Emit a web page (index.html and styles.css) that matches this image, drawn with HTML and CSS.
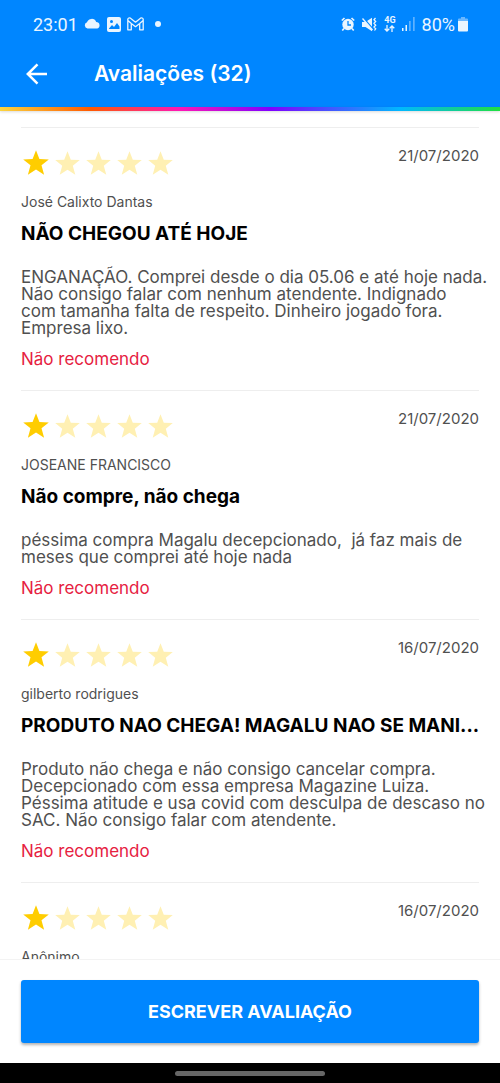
FILE: index.html
```
<!DOCTYPE html>
<html lang="pt-BR">
<head>
<meta charset="utf-8">
<meta name="viewport" content="width=device-width, initial-scale=1">
<title>Avaliações (32)</title>
<link rel="stylesheet" href="styles.css">
</head>
<body>
<svg class="defs" aria-hidden="true">
  <symbol id="star" viewBox="0 0 26 26"><path d="M13 .3 16.400 9 25.800 9.400 18.500 15.300 21.100 24.800 13 19.600 4.900 24.800 7.500 15.300.2 9.400 9.600 9Z"/></symbol>
</svg>
<header class="header">
  <div class="status">
    <span class="clock">23:01</span>
    <svg class="cloud" width="17" height="12" viewBox="0 0 17 12" fill="#eaf5ff"><path d="M3.500 10.500A3.200 3.200 0 0 1 3 4.300 4.900 4.900 0 0 1 12.200 3.900 3.400 3.400 0 0 1 13.300 10.500Z"/></svg>
    <svg class="photo" width="14" height="15" viewBox="0 0 14 15"><rect width="14" height="15" rx="2" fill="#eaf5ff"/><path d="M2 11.500 5 8l2 2 3-4 2.500 3.500v2.500H2Z" fill="#0086ff"/><circle cx="4.500" cy="4.500" r="1.500" fill="#0086ff"/></svg>
    <svg class="mail" width="17" height="14" viewBox="0 0 17 14" fill="none" stroke="#eaf5ff" stroke-width="1.300" stroke-linejoin="round"><path d="M.8 12.800V2.200Q1.500.3 3.500 1.200L8.500 5.200 13.500 1.200Q15.500.3 16.200 2.200V12.800H12.700V6.400L8.500 9.700 4.300 6.400V12.800ZM4.300 6.400.9 3.500M12.700 6.400 16.100 3.500"/></svg>
    <span class="dot"></span>
    <span class="spacer"></span>
    <svg class="alarm" width="14" height="15" viewBox="0 0 14 15"><circle cx="7" cy="7.500" r="5.700" fill="#eaf5ff"/><path d="M.8 3.500 3.500 1M10.500 1l2.700 2.500M3 11.500l-1.700 2M11 11.500l1.700 2" stroke="#eaf5ff" stroke-width="1.700"/><path d="M7 4v4h3" fill="none" stroke="#0086ff" stroke-width="1.300"/></svg>
    <svg class="mute" width="15" height="15" viewBox="0 0 15 15"><path d="M0 5h3.500L10 .8v13.400L3.500 10H0Z" fill="#eaf5ff"/><path d="M1 .5 11 12" stroke="#0086ff" stroke-width="1.500"/><path d="M.5 1.500 10.500 13" stroke="#eaf5ff" stroke-width="1.300"/><path d="M13.500 1 12 2.700 13.700 4.500 12 6.300 13.700 8.200 12 10 13.700 11.800 12.500 13.500" fill="none" stroke="#eaf5ff" stroke-width="1.300"/></svg>
    <span class="network"><span>4G</span><svg width="11" height="7" viewBox="0 0 11 7" fill="none" stroke="#eaf5ff" stroke-width="1.300"><path d="M3 0v6M.7 3.700 3 6l2.300-2.300M8 7V1M5.700 3.300 8 1l2.300 2.300"/></svg></span>
    <svg class="signal" width="13" height="14" viewBox="0 0 13 14" fill="#eaf5ff"><path d="M0 11h1.500v3H0ZM3.500 8H5v6H3.500Z"/><path opacity=".4" d="M7 4h1.700v10H7ZM11 0h1.700v14H11Z"/></svg>
    <span class="charge">80%</span>
    <svg class="battery" width="10" height="15" viewBox="0 0 10 15" fill="#eaf5ff"><path opacity=".45" d="M3 0h4v1.500H9q1 0 1 1V5H0V2.500q0-1 1-1H3Z"/><path d="M0 4h10v9.500q0 1-1 1H1q-1 0-1-1Z"/></svg>
  </div>
  <div class="toolbar">
    <button class="back" type="button" aria-label="Voltar"><svg width="22" height="22" viewBox="0 0 22 22" fill="none" stroke="#fff" stroke-width="2.500"><path d="M21 11H2.500M11.500 1.300 1.800 11l9.700 9.700"/></svg></button>
    <h1 class="heading">Avaliações (32)</h1>
  </div>
</header>
<div class="rainbow"></div>
<main class="reviews">
  <article class="review">
    <div class="meta">
      <div class="stars" role="img" aria-label="1 de 5 estrelas"><svg class="star on"><use href="#star"/></svg><svg class="star"><use href="#star"/></svg><svg class="star"><use href="#star"/></svg><svg class="star"><use href="#star"/></svg><svg class="star"><use href="#star"/></svg></div>
      <time class="date">21/07/2020</time>
    </div>
    <p class="author">José Calixto Dantas</p>
    <h2 class="title">NÃO CHEGOU ATÉ HOJE</h2>
    <p class="text">ENGANAÇÃO. Comprei desde o dia 05.06 e até hoje nada.<br>Não consigo falar com nenhum atendente. Indignado<br>com tamanha falta de respeito. Dinheiro jogado fora.<br>Empresa lixo.</p>
    <p class="verdict">Não recomendo</p>
  </article>
  <article class="review">
    <div class="meta">
      <div class="stars" role="img" aria-label="1 de 5 estrelas"><svg class="star on"><use href="#star"/></svg><svg class="star"><use href="#star"/></svg><svg class="star"><use href="#star"/></svg><svg class="star"><use href="#star"/></svg><svg class="star"><use href="#star"/></svg></div>
      <time class="date">21/07/2020</time>
    </div>
    <p class="author">JOSEANE FRANCISCO</p>
    <h2 class="title">Não compre, não chega</h2>
    <p class="text">péssima compra Magalu decepcionado,&nbsp; já faz mais de<br>meses que comprei até hoje nada</p>
    <p class="verdict">Não recomendo</p>
  </article>
  <article class="review">
    <div class="meta">
      <div class="stars" role="img" aria-label="1 de 5 estrelas"><svg class="star on"><use href="#star"/></svg><svg class="star"><use href="#star"/></svg><svg class="star"><use href="#star"/></svg><svg class="star"><use href="#star"/></svg><svg class="star"><use href="#star"/></svg></div>
      <time class="date">16/07/2020</time>
    </div>
    <p class="author">gilberto rodrigues</p>
    <h2 class="title">PRODUTO NAO CHEGA! MAGALU NAO SE MANI...</h2>
    <p class="text">Produto não chega e não consigo cancelar compra.<br>Decepcionado com essa empresa Magazine Luiza.<br>Péssima atitude e usa covid com desculpa de descaso no<br>SAC. Não consigo falar com atendente.</p>
    <p class="verdict">Não recomendo</p>
  </article>
  <article class="review">
    <div class="meta">
      <div class="stars" role="img" aria-label="1 de 5 estrelas"><svg class="star on"><use href="#star"/></svg><svg class="star"><use href="#star"/></svg><svg class="star"><use href="#star"/></svg><svg class="star"><use href="#star"/></svg><svg class="star"><use href="#star"/></svg></div>
      <time class="date">16/07/2020</time>
    </div>
    <p class="author">Anônimo</p>
  </article>
</main>
<footer class="actions">
  <button class="write" type="button">ESCREVER AVALIAÇÃO</button>
</footer>
<div class="gesture"><span class="handle"></span></div>
</body>
</html>
```
FILE: styles.css
```
* {
  box-sizing: border-box;
}

body {
  margin: 0;
  height: 100vh;
  display: flex;
  flex-direction: column;
  background: #fff;
  color: #505050;
  font-family: Inter, "Open Sans", sans-serif;
}

h1,
h2,
p {
  margin: 0;
}

svg {
  flex: none;
}

.defs {
  position: absolute;
  width: 0;
  height: 0;
}

.header {
  flex: none;
  background: #0086ff;
  color: #fff;
}

.status {
  display: flex;
  align-items: center;
  height: 48px;
  padding: 0 32px 0 33px;
  color: #eaf5ff;
  font-family: Roboto, sans-serif;
  font-size: 18px;
}

.cloud {
  margin-left: 6px;
}

.photo {
  margin-left: 6px;
}

.mail {
  margin-left: 6px;
}

.dot {
  width: 6px;
  height: 6px;
  margin-left: 11px;
  border-radius: 50%;
  background: #eaf5ff;
}

.spacer {
  flex: 1;
}

.mute {
  margin-left: 7px;
}

.network {
  display: flex;
  flex-direction: column;
  align-items: center;
  margin: 0 6px 0 7px;
  font-size: 9px;
  font-weight: 700;
  line-height: 9px;
}

.charge {
  margin: 0 3px 0 7px;
}

.toolbar {
  display: flex;
  align-items: center;
  height: 59px;
  padding: 0 26px 7px;
}

.back {
  display: flex;
  padding: 0;
  border: 0;
  background: none;
}

.heading {
  margin-left: 46px;
  font-size: 21px;
  font-weight: 600;
  line-height: 28px;
}

.rainbow {
  flex: none;
  height: 4px;
  background: linear-gradient(90deg, #fcd53f 0%, #ff5a00 18%, #ff16b5 36%, #8000ff 54%, #00b8ff 80%, #20e040 100%);
  box-shadow: 0 1px 3px rgba(0, 0, 0, 0.15);
}

.reviews {
  flex: 1;
  min-height: 0;
  overflow: hidden;
  padding: 16px 21px 0;
}

.review {
  padding: 18px 0 21px;
  border-top: 1px solid #eee;
}

.meta {
  display: flex;
  justify-content: space-between;
  height: 46px;
}

.stars {
  display: flex;
  height: 34px;
  align-items: center;
}

.star {
  width: 25px;
  height: 25px;
  margin-left: 6px;
  fill: #fff0b3;
}

.star.on {
  width: 26px;
  height: 26px;
  margin-left: 2px;
  fill: #ffcd00;
}

.date {
  font-size: 15px;
  line-height: 20px;
}

.author {
  font-size: 14px;
  line-height: 20px;
}

.title {
  margin-top: 10px;
  overflow: hidden;
  color: #000;
  font-size: 19px;
  font-weight: 700;
  line-height: 24px;
  white-space: nowrap;
}

.text {
  margin-top: 23px;
  font-size: 17px;
  line-height: 17px;
  white-space: nowrap;
}

.verdict {
  margin-top: 12px;
  color: #e6213f;
  font-size: 17px;
  line-height: 20px;
}

.actions {
  flex: none;
  padding: 20px 21px;
  border-top: 1px solid #f3f3f3;
}

.write {
  display: block;
  width: 100%;
  height: 63px;
  border: 0;
  border-radius: 3px;
  background: #0086ff;
  box-shadow: 0 2px 3px rgba(0, 0, 0, 0.3);
  color: #fff;
  font: 700 18px/24px Inter, "Open Sans", sans-serif;
}

.gesture {
  flex: none;
  display: flex;
  justify-content: center;
  align-items: center;
  height: 20px;
  background: #000;
}

.handle {
  width: 30%;
  height: 5px;
  border-radius: 3px;
  background: #666;
}
```
